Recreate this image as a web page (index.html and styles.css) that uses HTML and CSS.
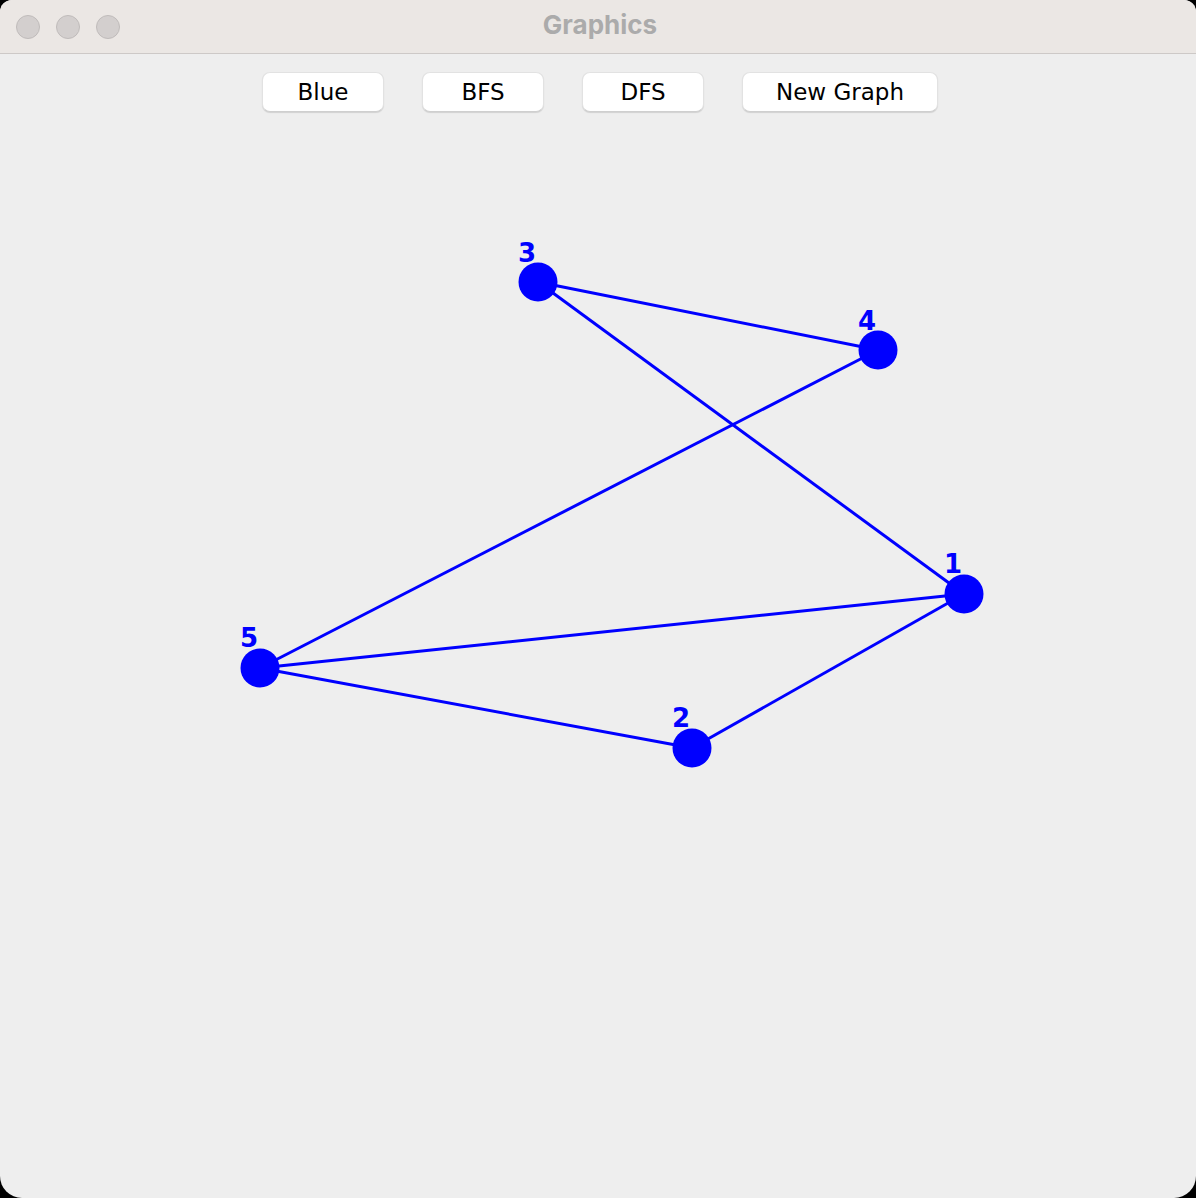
FILE: index.html
```html
<!DOCTYPE html>
<html>
<head>
<meta charset="utf-8">
<title>Graphics</title>
<link rel="stylesheet" href="styles.css">
</head>
<body>
<div class="window">
  <div class="titlebar">
    <div class="lights">
      <span class="light"></span>
      <span class="light"></span>
      <span class="light"></span>
    </div>
    <div class="title">Graphics</div>
    <div></div>
  </div>
  <div class="toolbar">
    <button class="btn">Blue</button>
    <button class="btn">BFS</button>
    <button class="btn">DFS</button>
    <button class="btn wide">New Graph</button>
  </div>
  <div class="canvas">
    <svg class="graph" width="1196" height="1086" viewBox="0 112 1196 1086">
      <g class="edges">
        <line x1="538" y1="282" x2="878" y2="350"/>
        <line x1="538" y1="282" x2="964" y2="594"/>
        <line x1="878" y1="350" x2="260" y2="668"/>
        <line x1="260" y1="668" x2="964" y2="594"/>
        <line x1="260" y1="668" x2="692" y2="748"/>
        <line x1="692" y1="748" x2="964" y2="594"/>
      </g>
      <g class="nodes">
        <circle cx="538" cy="282" r="19.5"/>
        <circle cx="878" cy="350" r="19.5"/>
        <circle cx="964" cy="594" r="19.5"/>
        <circle cx="260" cy="668" r="19.5"/>
        <circle cx="692" cy="748" r="19.5"/>
      </g>
      <g class="labels">
        <text x="518" y="262">3</text>
        <text x="858" y="330">4</text>
        <text x="944" y="573">1</text>
        <text x="240" y="647">5</text>
        <text x="672" y="727">2</text>
      </g>
    </svg>
  </div>
</div>
</body>
</html>
```
FILE: styles.css
```css
html, body {
  margin: 0;
  padding: 0;
  background: #000;
}
body {
  width: 1196px;
  height: 1198px;
  overflow: hidden;
}
.window {
  width: 1196px;
  height: 1198px;
  background: #eeeeee;
  border-radius: 12px 12px 22px 22px;
  overflow: hidden;
  display: flex;
  flex-direction: column;
}
.titlebar {
  height: 53px;
  flex: none;
  background: #ebe7e4;
  border-bottom: 1px solid #cdc9c7;
  display: grid;
  grid-template-columns: 1fr auto 1fr;
  align-items: center;
}
.lights {
  display: flex;
  gap: 16px;
  padding-left: 16px;
}
.light {
  width: 22px;
  height: 22px;
  border-radius: 50%;
  background: #d3cfce;
  border: 1px solid #c0bcbb;
}
.title {
  font-family: Inter, "Noto Sans", sans-serif;
  font-weight: 700;
  font-size: 26px;
  color: #ababab;
  padding-bottom: 4px;
  padding-left: 4px;
}
.toolbar {
  flex: none;
  display: flex;
  justify-content: center;
  gap: 38px;
  padding-top: 18px;
  padding-left: 4px;
}
.btn {
  width: 122px;
  height: 40px;
  box-sizing: border-box;
  background: #ffffff;
  border: 1px solid #e2e2e2;
  border-bottom-color: #cfcfcf;
  border-radius: 8px;
  box-shadow: 0 1px 1px rgba(0,0,0,0.12);
  font-family: "DejaVu Sans", sans-serif;
  font-size: 23px;
  color: #000;
  padding: 0;
  line-height: 36px;
}
.btn.wide {
  width: 196px;
}
.canvas {
  flex: 1;
}
.graph {
  display: block;
}
.edges line {
  stroke: #0000ff;
  stroke-width: 3;
}
.nodes circle {
  fill: #0000ff;
}
.labels text {
  fill: #0000ff;
  font-family: "DejaVu Sans", sans-serif;
  font-weight: 700;
  font-size: 26px;
}
```
